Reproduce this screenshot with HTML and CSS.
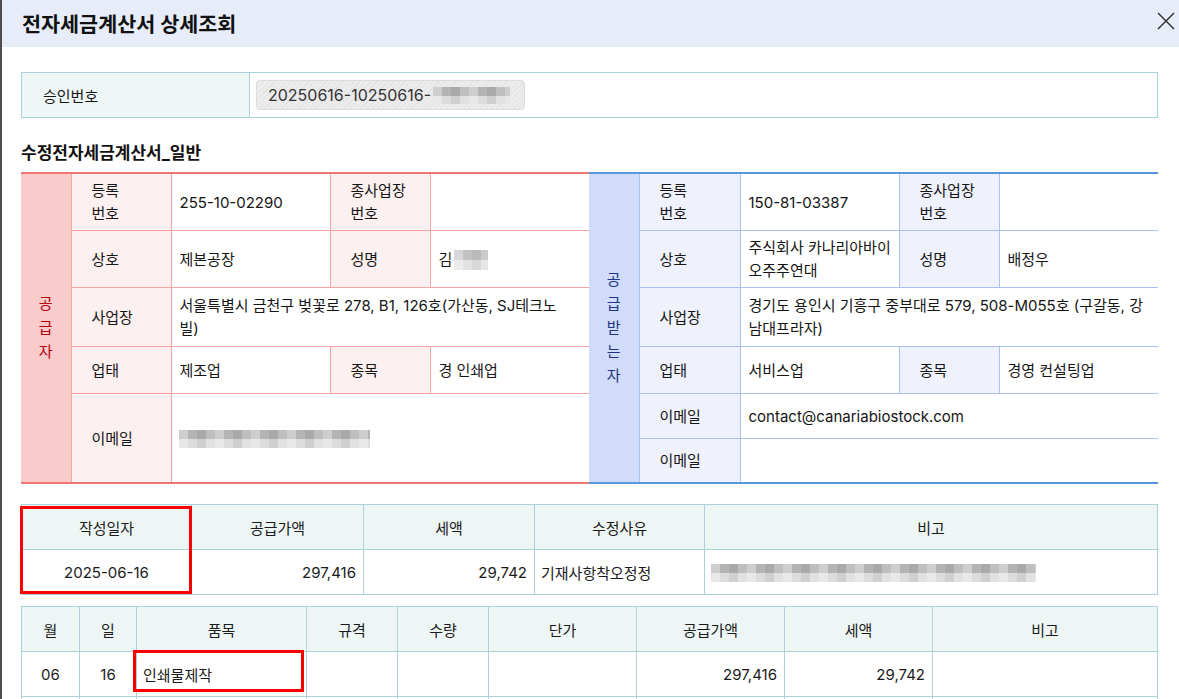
FILE: index.html
```html
<!DOCTYPE html>
<html lang="ko">
<head>
    <meta charset="UTF-8">
    <meta name="viewport" content="width=device-width, initial-scale=1.0">
    <title>전자세금계산서 상세조회</title>
    <link rel="stylesheet" href="styles.css">
</head>
<body>
    <div class="modal-header">
        <h1 class="modal-title">전자세금계산서 상세조회</h1>
        <button class="close-btn" type="button" aria-label="닫기">
            <svg width="18" height="18" viewBox="0 0 18 18">
                <path d="M1 1 L17 17 M17 1 L1 17" stroke="#333" stroke-width="1.5" fill="none"/>
            </svg>
        </button>
    </div>

    <div class="modal-body">
        <table class="approval-table">
            <tr>
                <th>승인번호</th>
                <td>
                    <div class="readonly-input">20250616-10250616-<span class="mosaic m-approval"></span></div>
                </td>
            </tr>
        </table>

        <h2 class="section-title">수정전자세금계산서_일반</h2>

        <div class="party-wrap">
            <table class="party supplier">
                <colgroup>
                    <col class="c-side"><col class="c-label"><col class="c-value"><col class="c-label2"><col class="c-value">
                </colgroup>
                <tr class="r1">
                    <th class="side" rowspan="5">공<br>급<br>자</th>
                    <th>등록<br>번호</th>
                    <td>255-10-02290</td>
                    <th>종사업장<br>번호</th>
                    <td></td>
                </tr>
                <tr class="r2">
                    <th>상호</th>
                    <td>제본공장</td>
                    <th>성명</th>
                    <td>김<span class="mosaic m-name"></span></td>
                </tr>
                <tr class="r3">
                    <th>사업장</th>
                    <td colspan="3">서울특별시 금천구 벚꽃로 278, B1, 126호(가산동, SJ테크노<br>빌)</td>
                </tr>
                <tr class="r4">
                    <th>업태</th>
                    <td>제조업</td>
                    <th>종목</th>
                    <td>경 인쇄업</td>
                </tr>
                <tr class="r5">
                    <th>이메일</th>
                    <td colspan="3"><span class="mosaic m-email"></span></td>
                </tr>
            </table>

            <table class="party buyer">
                <colgroup>
                    <col class="c-side"><col class="c-label-b"><col class="c-value"><col class="c-label2"><col class="c-value">
                </colgroup>
                <tr class="r1">
                    <th class="side" rowspan="6">공<br>급<br>받<br>는<br>자</th>
                    <th>등록<br>번호</th>
                    <td>150-81-03387</td>
                    <th>종사업장<br>번호</th>
                    <td></td>
                </tr>
                <tr class="r2">
                    <th>상호</th>
                    <td class="nowrap">주식회사 카나리아바이<br>오주주연대</td>
                    <th>성명</th>
                    <td>배정우</td>
                </tr>
                <tr class="r3">
                    <th>사업장</th>
                    <td colspan="3">경기도 용인시 기흥구 중부대로 579, 508-M055호 (구갈동, 강<br>남대프라자)</td>
                </tr>
                <tr class="r4">
                    <th>업태</th>
                    <td>서비스업</td>
                    <th>종목</th>
                    <td>경영 컨설팅업</td>
                </tr>
                <tr class="r5h">
                    <th>이메일</th>
                    <td colspan="3">contact@canariabiostock.com</td>
                </tr>
                <tr class="r6h">
                    <th>이메일</th>
                    <td colspan="3"></td>
                </tr>
            </table>
        </div>

        <div class="summary-wrap">
            <table class="grid-table">
                <colgroup>
                    <col class="s1"><col class="s2"><col class="s3"><col class="s4"><col>
                </colgroup>
                <tr>
                    <th>작성일자</th>
                    <th>공급가액</th>
                    <th>세액</th>
                    <th>수정사유</th>
                    <th>비고</th>
                </tr>
                <tr>
                    <td class="center">2025-06-16</td>
                    <td class="num">297,416</td>
                    <td class="num">29,742</td>
                    <td>기재사항착오정정</td>
                    <td><span class="mosaic m-note"></span></td>
                </tr>
            </table>
            <div class="highlight hl-date"></div>
        </div>

        <div class="items-wrap">
            <table class="grid-table">
                <colgroup>
                    <col class="i1"><col class="i2"><col class="i3"><col class="i4"><col class="i5"><col class="i6"><col class="i7"><col class="i8"><col>
                </colgroup>
                <tr>
                    <th>월</th>
                    <th>일</th>
                    <th>품목</th>
                    <th>규격</th>
                    <th>수량</th>
                    <th>단가</th>
                    <th>공급가액</th>
                    <th>세액</th>
                    <th>비고</th>
                </tr>
                <tr>
                    <td class="center">06</td>
                    <td class="center">16</td>
                    <td>인쇄물제작</td>
                    <td></td>
                    <td></td>
                    <td></td>
                    <td class="num">297,416</td>
                    <td class="num">29,742</td>
                    <td></td>
                </tr>
                <tr>
                    <td></td><td></td><td></td><td></td><td></td><td></td><td></td><td></td><td></td>
                </tr>
            </table>
            <div class="highlight hl-item"></div>
        </div>
    </div>
</body>
</html>
```

FILE: styles.css
```css
body {
    margin: 0;
    min-height: 100vh;
    border-left: 2px solid #4d4d4d;
    font-family: Inter, "Noto Sans CJK KR", sans-serif;
    font-size: 15px;
    color: #151515;
    background: #fff;
}

/* header */
.modal-header {
    height: 47px;
    background: #e6edf8;
    display: flex;
    align-items: center;
    justify-content: space-between;
    padding: 0 3px 0 20px;
}

.modal-title {
    margin: 0 0 2px;
    font-size: 20.7px;
    font-weight: 700;
    color: #111;
}

.close-btn {
    width: 20px;
    height: 20px;
    padding: 0;
    margin-bottom: 4px;
    border: none;
    background: none;
    cursor: pointer;
}

.modal-body {
    padding: 25px 21px 0 19px;
}

/* approval number */
.approval-table {
    width: 100%;
    border-collapse: collapse;
    table-layout: fixed;
    border: 1px solid #a9d3d8;
}

.approval-table th {
    width: 206px;
    height: 44px;
    padding: 0 0 0 21px;
    background: #eef7f6;
    border-right: 1px solid #a9d3d8;
    text-align: left;
    font-weight: 400;
}

.approval-table td {
    padding: 0 6px;
}

.readonly-input {
    width: 269px;
    height: 30px;
    box-sizing: border-box;
    display: flex;
    align-items: center;
    padding-left: 11px;
    border: 1px solid #dcdcdc;
    border-radius: 4px;
    color: #333;
    font-size: 16px;
    background: repeating-linear-gradient(-45deg, #ececec 0 3px, #e3e3e3 3px 4px);
}

.section-title {
    margin: 23px 0 7px;
    font-size: 17px;
    line-height: 24px;
    font-weight: 700;
    color: #111;
}

/* supplier / buyer */
.party-wrap {
    display: flex;
}

.party {
    border-collapse: collapse;
    table-layout: fixed;
}

.supplier {
    width: 568px;
    border-top: 2px solid #f07575;
    border-bottom: 2px solid #f07575;
}

.buyer {
    width: 569px;
    border-top: 2px solid #5b96dc;
    border-bottom: 2px solid #5b96dc;
}

.c-side { width: 50px; }
.c-label { width: 100px; }
.c-label-b { width: 101px; }
.c-value { width: 159px; }
.c-label2 { width: 100px; }

.party th,
.party td {
    padding: 0 4px 0 8px;
    text-align: left;
    font-weight: 400;
    line-height: 23px;
    vertical-align: middle;
}

.party td.nowrap {
    white-space: nowrap;
    padding-right: 0;
}

.party th {
    padding-left: 20px;
}

.supplier th,
.supplier td {
    border: 1px solid #f5a3a3;
}

.buyer th,
.buyer td {
    border: 1px solid #a9bff5;
}

.party td:last-child {
    border-right: none;
}

.party th.side {
    padding: 0;
    border-left: none;
    text-align: center;
    line-height: 24px;
}

.supplier th {
    background: #fdf0f0;
}

.supplier th.side {
    background: #f9cbcb;
    color: #b3000c;
}

.buyer th {
    background: #eff2fd;
}

.buyer th.side {
    background: #d1dcfb;
    color: #1f3584;
}

.party .r1 > * { height: 56px; }
.party .r2 > * { height: 56px; }
.party .r3 > * { height: 58px; }
.party .r4 > * { height: 46px; }
.party .r5 > * { height: 88px; }
.party .r5h > * { height: 44px; }
.party .r6h > * { height: 43px; }

/* lower tables */
.summary-wrap,
.items-wrap {
    position: relative;
}

.summary-wrap {
    margin-top: 20px;
}

.items-wrap {
    margin-top: 11px;
}

.grid-table {
    width: 100%;
    border-collapse: collapse;
    table-layout: fixed;
    border: 1px solid #acd2d8;
}

.grid-table th,
.grid-table td {
    height: 44px;
    border: 1px solid #acd2d8;
    padding: 0 6px;
    font-weight: 400;
    color: #1a1a1a;
}

.grid-table th {
    background: #edf6f5;
    text-align: center;
}

.grid-table td.center { text-align: center; }
.grid-table td.num { text-align: right; padding-right: 7px; }

.s1 { width: 170px; }
.s2 { width: 172px; }
.s3 { width: 171px; }
.s4 { width: 170px; }

.i1 { width: 58px; }
.i2 { width: 57px; }
.i3 { width: 170px; }
.i4 { width: 91px; }
.i5 { width: 91px; }
.i6 { width: 148px; }
.i7 { width: 148px; }
.i8 { width: 148px; }

.highlight {
    position: absolute;
    box-sizing: border-box;
    border: 3px solid #f00;
    pointer-events: none;
}

.hl-date {
    left: -1px;
    top: 2px;
    width: 172px;
    height: 88px;
}

.hl-item {
    left: 112px;
    top: 44px;
    width: 171px;
    height: 42px;
}

/* masked personal data */
.mosaic {
    display: inline-block;
    vertical-align: middle;
    background-image:
        repeating-linear-gradient(90deg, rgba(255, 255, 255, 0.35) 0 9px, transparent 9px 18px, rgba(0, 0, 0, 0.06) 18px 27px, rgba(255, 255, 255, 0.15) 27px 36px),
        linear-gradient(#b4b4b4 0 50%, #dcdcdc 50% 100%);
}

.m-approval {
    width: 77px;
    height: 17px;
    margin-left: 2px;
}

.m-name {
    width: 34px;
    height: 20px;
    margin-left: 2px;
    opacity: 0.8;
}

.m-email {
    width: 191px;
    height: 18px;
    margin-left: -1px;
}

.m-note {
    width: 325px;
    height: 18px;
}
```
